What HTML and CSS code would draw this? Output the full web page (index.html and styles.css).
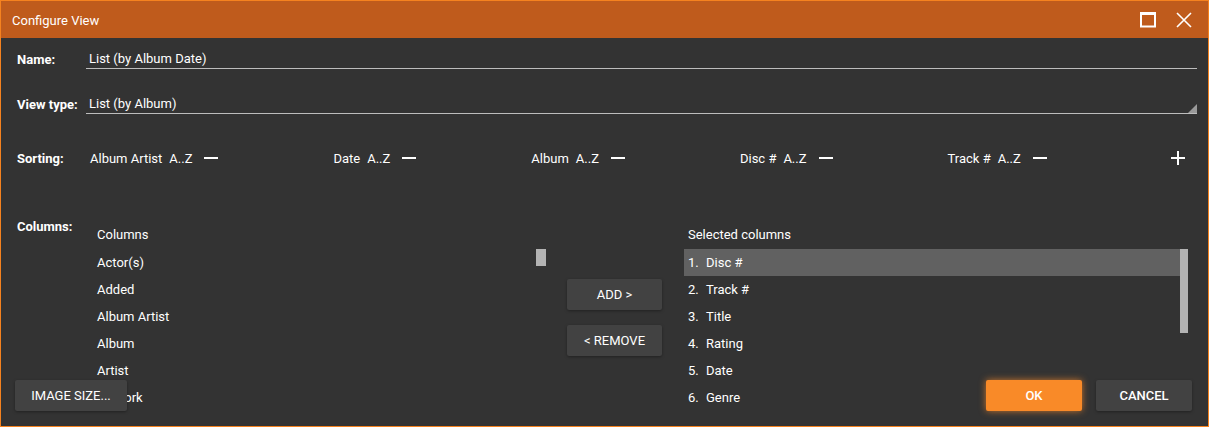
FILE: index.html
```html
<!DOCTYPE html>
<html lang="en">
<head>
    <meta charset="UTF-8" />
    <title>Configure View</title>
    <link rel="stylesheet" href="styles.css">
</head>
<body>
    <div class="dialog">
        <div class="title_bar">
            <span class="title">Configure View</span>
            <div class="window_buttons">
                <svg class="win_icon" width="18" height="18" viewBox="0 0 18 18">
                    <rect x="2" y="2.5" width="14" height="13" fill="none" stroke="#fff" stroke-width="2"/>
                    <line x1="1" y1="2.5" x2="17" y2="2.5" stroke="#fff" stroke-width="3"/>
                </svg>
                <svg class="win_icon" width="18" height="18" viewBox="0 0 18 18">
                    <path d="M2 2 L16 16 M16 2 L2 16" stroke="#fff" stroke-width="1.6" fill="none"/>
                </svg>
            </div>
        </div>

        <div class="content">
            <div class="form_row name_row">
                <label class="row_label">Name:</label>
                <div class="field">List (by Album Date)</div>
            </div>

            <div class="form_row type_row">
                <label class="row_label">View type:</label>
                <div class="field select">List (by Album)<span class="corner"></span></div>
            </div>

            <div class="form_row sort_row">
                <label class="row_label">Sorting:</label>
                <div class="sort_list">
                    <div class="sort_item"><span class="sort_name">Album Artist</span><span class="sort_dir">A..Z</span><span class="minus"></span></div>
                    <div class="sort_item"><span class="sort_name">Date</span><span class="sort_dir">A..Z</span><span class="minus"></span></div>
                    <div class="sort_item"><span class="sort_name">Album</span><span class="sort_dir">A..Z</span><span class="minus"></span></div>
                    <div class="sort_item"><span class="sort_name">Disc #</span><span class="sort_dir">A..Z</span><span class="minus"></span></div>
                    <div class="sort_item"><span class="sort_name">Track #</span><span class="sort_dir">A..Z</span><span class="minus"></span></div>
                    <span class="plus"></span>
                </div>
            </div>

            <div class="columns_row">
                <label class="row_label">Columns:</label>

                <div class="source_list">
                    <div class="list_header">Columns</div>
                    <div class="list_body">
                        <ul class="list_items">
                            <li>Actor(s)</li>
                            <li>Added</li>
                            <li>Album Artist</li>
                            <li>Album</li>
                            <li>Artist</li>
                            <li>Artwork</li>
                        </ul>
                        <div class="scroll_track small"><div class="thumb"></div></div>
                    </div>
                </div>

                <div class="mover">
                    <button class="btn">ADD &gt;</button>
                    <button class="btn">&lt; REMOVE</button>
                </div>

                <div class="target_list">
                    <div class="list_header">Selected columns</div>
                    <div class="list_body">
                        <ol class="list_items">
                            <li class="selected"><span class="num">1.</span>Disc #</li>
                            <li><span class="num">2.</span>Track #</li>
                            <li><span class="num">3.</span>Title</li>
                            <li><span class="num">4.</span>Rating</li>
                            <li><span class="num">5.</span>Date</li>
                            <li><span class="num">6.</span>Genre</li>
                        </ol>
                        <div class="scroll_track big"><div class="thumb"></div></div>
                    </div>
                </div>
            </div>
        </div>

        <div class="footer">
            <button class="btn wide">IMAGE SIZE...</button>
            <div class="footer_right">
                <button class="btn ok">OK</button>
                <button class="btn cancel">CANCEL</button>
            </div>
        </div>
    </div>
</body>
</html>
```

FILE: styles.css
```css
/* Reset */
* {
    margin: 0;
    padding: 0;
    box-sizing: border-box;
    font-family: "Roboto", "Liberation Sans", sans-serif;
}

body {
    width: 1209px;
    height: 427px;
    background: #333333;
    overflow: hidden;
}

/* Dialog frame */
.dialog {
    position: relative;
    width: 1209px;
    height: 427px;
    border: 1px solid #f5821f;
    background: #333333;
    color: #ffffff;
    font-size: 13px;
    overflow: hidden;
}

.title_bar {
    height: 38px;
    margin: -1px -1px 0 -1px;
    padding: 0 16px 0 12px;
    background: #bf5b1c;
    display: flex;
    align-items: center;
    justify-content: space-between;
}

.title {
    font-size: 13px;
    color: #ffffff;
    padding-top: 2px;
}

.window_buttons {
    display: flex;
    gap: 18px;
    padding-top: 1px;
}

.win_icon {
    display: block;
}

/* Form rows */
.content {
    padding: 0 11px 0 16px;
}

.form_row {
    display: flex;
    align-items: center;
    height: 20px;
}

.row_label {
    width: 69px;
    flex-shrink: 0;
    font-weight: 700;
    font-size: 13px;
    color: #ffffff;
}

.name_row {
    margin-top: 11px;
}

.type_row {
    margin-top: 25px;
}

.field {
    position: relative;
    flex: 1;
    height: 20px;
    line-height: 19px;
    padding-left: 3px;
    border-bottom: 1px solid #bdbdbd;
    color: #ffffff;
}

.field .corner {
    position: absolute;
    right: 0;
    bottom: 0;
    width: 0;
    height: 0;
    border-left: 9px solid transparent;
    border-bottom: 9px solid #9a9a9a;
}

/* Sorting */
.sort_row {
    margin-top: 34px;
}

.sort_list {
    flex: 1;
    display: flex;
    align-items: center;
    gap: 115px;
    padding-left: 4px;
    padding-right: 12px;
}

.sort_item {
    display: flex;
    align-items: center;
}

.sort_name {
    margin-right: 7px;
}

.sort_dir {
    margin-right: 12px;
}

.minus {
    display: block;
    width: 14px;
    height: 2px;
    background: #ffffff;
}

.plus {
    position: relative;
    margin-left: auto;
    width: 14px;
    height: 14px;
}

.plus::before,
.plus::after {
    content: '';
    position: absolute;
    background: #ffffff;
}

.plus::before {
    left: 0;
    top: 6px;
    width: 14px;
    height: 2px;
}

.plus::after {
    left: 6px;
    top: 0;
    width: 2px;
    height: 14px;
}

/* Columns chooser */
.columns_row {
    display: flex;
    margin-top: 52px;
}

.columns_row .row_label {
    line-height: 14px;
}

.list_header {
    height: 29px;
    line-height: 30px;
}

.list_body {
    display: flex;
}

.list_items {
    list-style: none;
    flex: 1;
}

.list_items li {
    height: 27px;
    line-height: 27px;
    white-space: nowrap;
}

.source_list {
    width: 462px;
}

.source_list .list_header,
.source_list .list_items li {
    padding-left: 11px;
}

.scroll_track {
    flex-shrink: 0;
}

.scroll_track .thumb {
    background: #b3b3b3;
}

.scroll_track.small {
    width: 10px;
    margin-right: 2px;
}

.scroll_track.small .thumb {
    height: 17px;
}

.scroll_track.big {
    width: 8px;
}

.scroll_track.big .thumb {
    height: 84px;
}

.mover {
    width: 136px;
    padding: 59px 0 0 19px;
    display: flex;
    flex-direction: column;
    gap: 15px;
}

.target_list {
    width: 504px;
}

.target_list .list_header,
.target_list .list_items li {
    padding-left: 4px;
}

.target_list .list_items li.selected {
    background: #616161;
}

.num {
    display: inline-block;
    width: 18px;
}

/* Buttons */
.btn {
    height: 31px;
    width: 95px;
    border: none;
    outline: none;
    border-radius: 2px;
    background: #424242;
    color: #ffffff;
    font-size: 13px;
    font-weight: 400;
    box-shadow: 0 1px 3px rgba(0, 0, 0, 0.35);
    cursor: pointer;
}

.btn.wide {
    width: 112px;
}

.btn.ok {
    width: 96px;
    font-weight: 500;
    background: #f98a28;
    box-shadow: 0 0 7px rgba(249, 138, 40, 0.75);
}

.btn.cancel {
    width: 96px;
    font-weight: 500;
}

/* Footer overlays the lists */
.footer {
    position: absolute;
    left: 14px;
    right: 16px;
    bottom: 15px;
    display: flex;
    justify-content: space-between;
}

.footer_right {
    display: flex;
    gap: 14px;
}
```
